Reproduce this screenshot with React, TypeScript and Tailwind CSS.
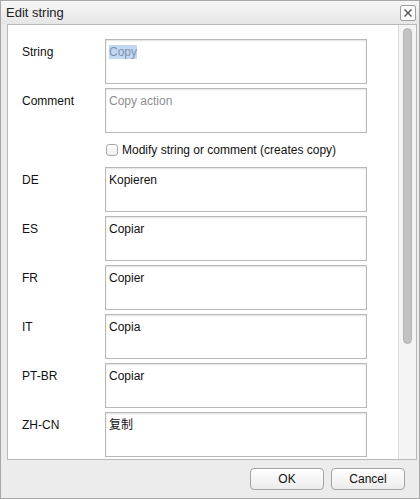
import React from 'react';

const langs: [string, string][] = [
  ['DE', 'Kopieren'],
  ['ES', 'Copiar'],
  ['FR', 'Copier'],
  ['IT', 'Copia'],
  ['PT-BR', 'Copiar'],
  ['ZH-CN', '复制'],
];

function Field({ children }: { children?: React.ReactNode }) {
  return (
    <div className="w-[262px] h-[45px] border border-[#b8b8b8] bg-white shadow-[inset_0_1px_2px_rgba(0,0,0,0.12)] px-[3px] pt-[5px] leading-[14px]">
      {children}
    </div>
  );
}

function Row({ label, children }: { label: string; children?: React.ReactNode }) {
  return (
    <div className="flex items-start">
      <div className="w-[83px] pt-[6px] leading-[14px]">{label}</div>
      <Field>{children}</Field>
    </div>
  );
}

export default function App() {
  return (
    <div className="w-[420px] h-[499px] bg-[#ececec] border border-[#a8a8a8] flex flex-col text-[12px] text-[#111] font-['Liberation_Sans','Noto_Sans_CJK_SC',sans-serif]">
      {/* title bar */}
      <div className="h-[23px] flex items-center justify-between pl-[5px] pr-[3px] bg-gradient-to-b from-[#f7f7f7] to-[#e6e6e6]">
        <span className="text-[13px] text-[#222]">Edit string</span>
        <div className="w-[16px] h-[16px] border border-[#a0a0a0] rounded-[2px] bg-[#fafafa] flex items-center justify-center">
          <svg width="10" height="10" viewBox="0 0 10 10">
            <path d="M1.5 1.5 L8.5 8.5 M8.5 1.5 L1.5 8.5" stroke="#555" strokeWidth="1.4" />
          </svg>
        </div>
      </div>

      {/* body */}
      <div className="ml-[6px] mr-[2px] h-[436px] border border-[#b9b9b9] bg-white flex">
        <div className="flex-1 overflow-hidden pl-[14px] pt-[14px] flex flex-col gap-[4px]">
          <Row label="String">
            <span className="bg-[#c3d7f0] text-[#7f93b2]">Copy</span>
          </Row>
          <Row label="Comment">
            <span className="text-[#8e8e8e]">Copy action</span>
          </Row>
          <div className="flex items-center h-[26px] pl-[84px]">
            <span className="w-[12px] h-[12px] border border-[#a9a9a9] rounded-[3px] bg-gradient-to-b from-white to-[#ededed] mr-[4px]" />
            <span>Modify string or comment (creates copy)</span>
          </div>
          {langs.map(([code, text]) => (
            <Row key={code} label={code}>
              {text}
            </Row>
          ))}
        </div>
        <div className="w-[18px] border-l border-[#dcdcdc] bg-[#f4f4f4] flex justify-center pt-[3px]">
          <div className="w-[9px] h-[316px] rounded-full bg-[#c2c2c2] border border-[#b3b3b3]" />
        </div>
      </div>

      {/* footer */}
      <div className="flex-1 flex items-center justify-end gap-[7px] pr-[14px] pb-[1px]">
        <button className="w-[74px] h-[22px] rounded-[4px] border border-[#a3a3a3] bg-gradient-to-b from-white to-[#ececec] text-[12px]">OK</button>
        <button className="w-[74px] h-[22px] rounded-[4px] border border-[#a3a3a3] bg-gradient-to-b from-white to-[#ececec] text-[12px]">Cancel</button>
      </div>
    </div>
  );
}
